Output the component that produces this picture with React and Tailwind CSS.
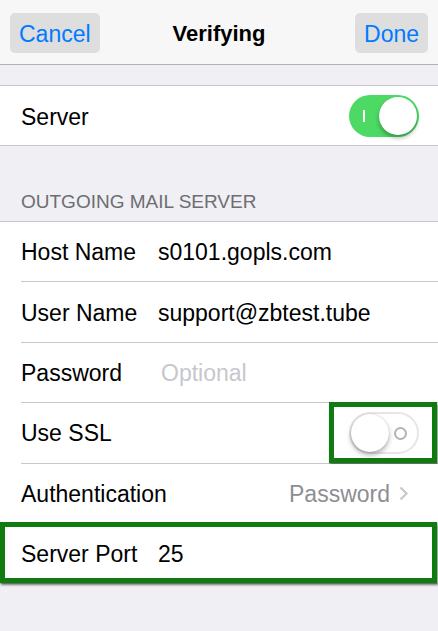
import React from 'react';

function Toggle({ on }) {
    if (on) {
        return (
            <div className="relative w-[70px] h-[42px] rounded-full bg-[#4cd964] flex items-center justify-end pr-[2px]">
                <div className="absolute left-[14px] top-[15px] w-[2px] h-[12px] bg-white" />
                <div className="w-[38px] h-[38px] rounded-full bg-white shadow-[0_3px_4px_rgba(0,0,0,0.3)]" />
            </div>
        );
    }
    return (
        <div className="relative w-[70px] h-[42px] rounded-full bg-white border-2 border-[#e6e6e6] flex items-center justify-start">
            <div className="absolute right-[10px] top-[13px] w-[13px] h-[13px] rounded-full border-2 border-[#b3b3b3]" />
            <div className="w-[38px] h-[38px] rounded-full bg-white shadow-[0_3px_5px_rgba(0,0,0,0.3),0_0_1px_rgba(0,0,0,0.25)]" />
        </div>
    );
}

function Row({ label, children, last, pr = 'pr-[21px]' }) {
    return (
        <div className="relative bg-white">
            <div className={`h-[59.4px] flex items-center pl-[21px] pt-[2px] ${pr}`}>
                {label && <span className="w-[137px] shrink-0 text-black">{label}</span>}
                {children}
            </div>
            {!last && <div className="ml-[21px] h-px bg-[#c8c7cc]" />}
        </div>
    );
}

export default function App() {
    return (
        <div className="min-h-[631px] bg-[#efeff4] font-['Liberation_Sans',Arial,sans-serif] text-[23px] leading-none">
            {/* Nav bar */}
            <div className="h-[65px] bg-[#f7f7f7] border-b border-[#b2b2b2] flex items-center px-[10px] pt-[2px]">
                <div className="flex-1 flex">
                    <div className="h-[40px] px-[9px] pt-[2px] rounded-[5px] bg-[#dedede] flex items-center text-[#007aff]">Cancel</div>
                </div>
                <div className="text-[22px] font-bold text-black pt-[2px]">Verifying</div>
                <div className="flex-1 flex justify-end">
                    <div className="h-[40px] px-[9px] pt-[2px] rounded-[5px] bg-[#dedede] flex items-center text-[#007aff]">Done</div>
                </div>
            </div>

            <div className="h-[20px]" />

            {/* Server toggle */}
            <div className="border-y border-[#c8c7cc] bg-white">
                <div className="h-[59px] flex items-center justify-between pl-[21px] pr-[19px]">
                    <span className="pt-[3px]">Server</span>
                    <Toggle on />
                </div>
            </div>

            {/* Section header */}
            <div className="h-[75px] flex items-end pl-[21px] pb-[10px] text-[19px] text-[#6d6d72]">
                OUTGOING MAIL SERVER
            </div>

            <div className="border-y border-[#c8c7cc] bg-white">
                <Row label="Host Name"><span>s0101.gopls.com</span></Row>
                <Row label="User Name"><span>support@zbtest.tube</span></Row>
                <Row label="Password"><span className="text-[#c7c7cd] pl-[3px]">Optional</span></Row>
                <Row label="Use SSL" pr="pr-[19px]">
                    <div className="ml-auto -mt-[2px]"><Toggle /></div>
                    <div className="absolute left-[329px] top-[-1px] w-[108px] h-[61px] border-[5px] border-[#0e7c0e] shadow-[1px_2px_2px_rgba(0,0,0,0.5)]" />
                </Row>
                <Row label="Authentication" pr="pr-[30px]">
                    <div className="ml-auto flex items-center gap-[9px] text-[#8e8e93]">
                        <span>Password</span>
                        <svg width="9" height="15" viewBox="0 0 9 15" fill="none" className="-mt-[2px]">
                            <path d="M1.5 1.5 L7.5 7.5 L1.5 13.5" stroke="#c7c7cc" strokeWidth="2.2" />
                        </svg>
                    </div>
                </Row>
                <Row label="Server Port" last>
                    <span>25</span>
                    <div className="absolute left-0 top-[-2px] w-[437px] h-[61px] border-[5px] border-[#0e7c0e] shadow-[1px_2px_2px_rgba(0,0,0,0.5)]" />
                </Row>
            </div>
        </div>
    );
}
